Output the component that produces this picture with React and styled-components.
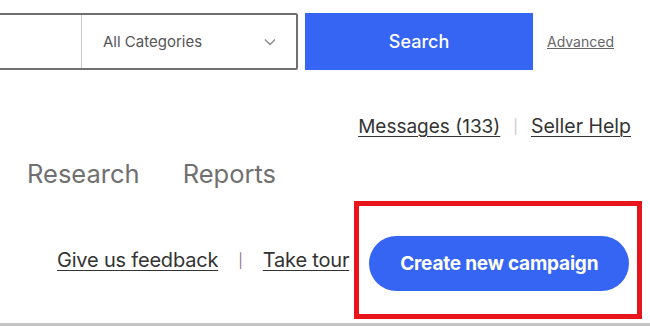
import React from "react";
import styled, { createGlobalStyle } from "styled-components";

const GlobalStyle = createGlobalStyle`
  html, body {
    margin: 0;
    padding: 0;
    background: #ffffff;
  }
  body {
    font-family: Inter, "Liberation Sans", Arial, sans-serif;
    color: #333333;
  }
`;

const Page = styled.div`
  width: 650px;
  height: 326px;
  overflow: hidden;
  display: flex;
  flex-direction: column;
  background: #ffffff;
  border-bottom: 3px solid #c4c4c4;
  box-sizing: border-box;
`;

const Header = styled.div`
  display: flex;
  align-items: center;
  padding-top: 13px;
`;

const SearchBox = styled.div`
  display: flex;
  align-items: center;
  width: 312px;
  height: 57px;
  margin-left: -14px;
  border: 2px solid #707070;
  border-radius: 2px;
  box-sizing: border-box;
`;

const QueryField = styled.div`
  width: 93px;
  height: 100%;
  border-right: 1px solid #c8c8c8;
`;

const CategorySelect = styled.div`
  flex: 1;
  display: flex;
  align-items: center;
  justify-content: space-between;
  padding: 0 20px 0 21px;
  font-size: 15px;
  color: #555555;
`;

const SearchButton = styled.button`
  width: 228px;
  height: 57px;
  margin-left: 7px;
  border: none;
  background: #3665f3;
  color: #ffffff;
  font-family: inherit;
  font-size: 18px;
  font-weight: 500;
`;

const AdvancedLink = styled.a`
  margin-left: 14px;
  font-size: 14px;
  color: #666666;
  text-decoration: underline;
`;

const UtilityRow = styled.div`
  display: flex;
  justify-content: flex-end;
  align-items: center;
  gap: 13px;
  padding: 0 19px 0 0;
  margin-top: 44px;
  height: 24px;
`;

const TextLink = styled.a`
  font-size: ${(p) => p.$size || 20}px;
  color: #333333;
  text-decoration: underline;
  text-decoration-thickness: 1px;
  text-underline-offset: 3px;
  white-space: nowrap;
  letter-spacing: ${(p) => p.$tracking || "-0.2px"};
`;

const Divider = styled.span`
  color: ${(p) => p.$color || "#c8c8c8"};
  font-size: 14px;
`;

const Tabs = styled.nav`
  display: flex;
  gap: 43px;
  padding-left: 27px;
  margin-top: 20px;
`;

const Tab = styled.span`
  font-size: 25.5px;
  color: #707070;
`;

const ActionRow = styled.div`
  display: flex;
  align-items: center;
  margin-top: 12px;
  padding-left: 57px;
`;

const Links = styled.div`
  display: flex;
  align-items: center;
  gap: 20px;
`;

const Highlight = styled.div`
  margin-left: 5px;
  width: 288px;
  height: 118px;
  box-sizing: border-box;
  border: 5px solid #e8141c;
  display: flex;
  align-items: center;
  padding: 7px 0 0 10px;
`;

const CampaignButton = styled.button`
  width: 260px;
  height: 55px;
  border: none;
  border-radius: 28px;
  background: #3665f3;
  color: #ffffff;
  font-family: inherit;
  font-size: 19px;
  font-weight: 700;
  letter-spacing: -0.2px;
`;

const Chevron = () => (
  <svg width="12" height="8" viewBox="0 0 12 8" fill="none">
    <path d="M1 1.5l5 5 5-5" stroke="#8a8a8a" strokeWidth="1.4" />
  </svg>
);

export default function App() {
  return (
    <>
      <GlobalStyle />
      <Page>
        <Header>
          <SearchBox>
            <QueryField />
            <CategorySelect>
              All Categories
              <Chevron />
            </CategorySelect>
          </SearchBox>
          <SearchButton>Search</SearchButton>
          <AdvancedLink>Advanced</AdvancedLink>
        </Header>
        <UtilityRow>
          <TextLink $size={19} $tracking="0px">Messages (133)</TextLink>
          <Divider>|</Divider>
          <TextLink $size={19.5} $tracking="0px">Seller Help</TextLink>
        </UtilityRow>
        <Tabs>
          <Tab>Research</Tab>
          <Tab>Reports</Tab>
        </Tabs>
        <ActionRow>
          <Links>
            <TextLink>Give us feedback</TextLink>
            <Divider $color="#9a6a8a">|</Divider>
            <TextLink>Take tour</TextLink>
          </Links>
          <Highlight>
            <CampaignButton>Create new campaign</CampaignButton>
          </Highlight>
        </ActionRow>
      </Page>
    </>
  );
}
